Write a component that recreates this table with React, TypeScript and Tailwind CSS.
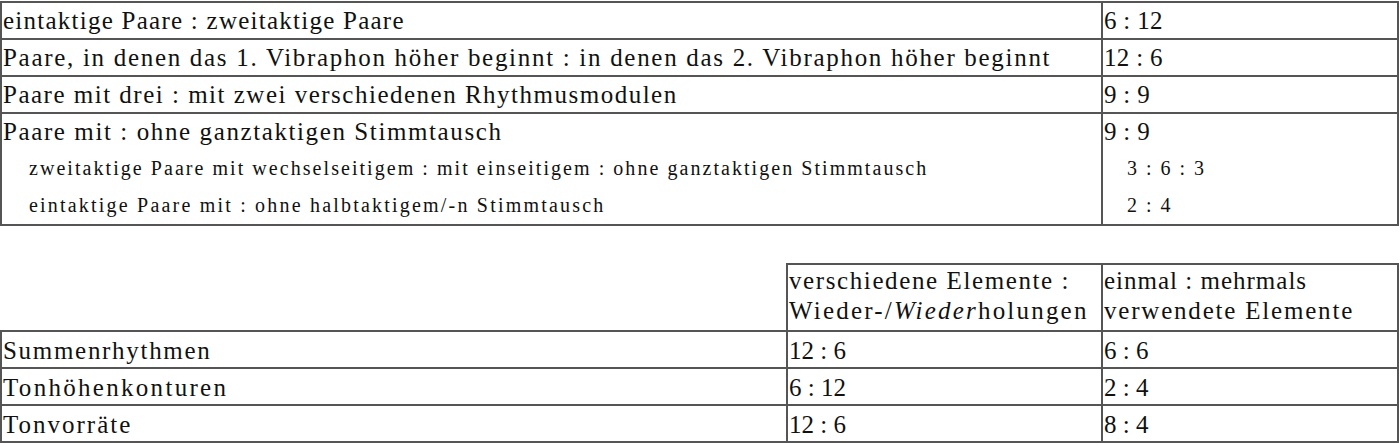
import React from 'react'

const topRows = [
  { label: 'eintaktige Paare : zweitaktige Paare', value: '6 : 12', track: 'tracking-[1.25px]' },
  {
    label: 'Paare, in denen das 1. Vibraphon höher beginnt : in denen das 2. Vibraphon höher beginnt',
    value: '12 : 6',
    track: 'tracking-[1.7px]',
  },
  { label: 'Paare mit drei : mit zwei verschiedenen Rhythmusmodulen', value: '9 : 9', track: 'tracking-[1.5px]' },
]

const subRows = [
  {
    label: 'zweitaktige Paare mit wechselseitigem : mit einseitigem : ohne ganztaktigen Stimmtausch',
    value: '3 : 6 : 3',
    track: 'tracking-[2.05px]',
  },
  { label: 'eintaktige Paare mit : ohne halbtaktigem/-n Stimmtausch', value: '2 : 4', track: 'tracking-[2.2px]' },
]

const bottomRows = [
  { label: 'Summenrhythmen', a: '12 : 6', b: '6 : 6', track: 'tracking-[1.7px]' },
  { label: 'Tonhöhenkonturen', a: '6 : 12', b: '2 : 4', track: 'tracking-[2.3px]' },
  { label: 'Tonvorräte', a: '12 : 6', b: '8 : 4', track: 'tracking-[2px]' },
]

const font = "font-['Liberation_Serif','Times_New_Roman',serif]"
const cell = 'border-2 border-[#555] px-[1px] align-top'

export default function App() {
  return (
    <div className={`w-[1400px] h-[443px] bg-white text-[#111] overflow-hidden ${font}`}>
      {/* first table */}
      <table className="border-collapse table-fixed w-[1399px] mt-[1px] text-[25px] leading-[35px]">
        <colgroup>
          <col className="w-[1101px]" />
          <col />
        </colgroup>
        <tbody>
          {topRows.map((r) => (
            <tr key={r.label} className="h-[37px]">
              <td className={`${cell} ${r.track}`}>{r.label}</td>
              <td className={`${cell} tracking-[0.3px]`}>{r.value}</td>
            </tr>
          ))}
          <tr>
            <td className={cell}>
              <div className="h-[36px] tracking-[1.6px]">Paare mit : ohne ganztaktigen Stimmtausch</div>
              {subRows.map((s) => (
                <div key={s.label} className={`h-[37px] pl-[26px] text-[20px] leading-[37px] ${s.track}`}>
                  {s.label}
                </div>
              ))}
            </td>
            <td className={cell}>
              <div className="h-[36px] tracking-[0.3px]">9 : 9</div>
              {subRows.map((s) => (
                <div key={s.value} className="h-[37px] pl-[23px] text-[20px] leading-[37px] tracking-[2px]">
                  {s.value}
                </div>
              ))}
            </td>
          </tr>
        </tbody>
      </table>

      {/* second table */}
      <table className="border-collapse table-fixed w-[1399px] mt-[37px] text-[25px] leading-[32px]">
        <colgroup>
          <col className="w-[786px]" />
          <col className="w-[315px]" />
          <col />
        </colgroup>
        <tbody>
          <tr className="h-[67px]">
            <td className="border-2 border-transparent border-b-[#555] border-r-[#555]" />
            <td className={`${cell} leading-[30px] pt-[1px]`}>
              <div className="tracking-[1.6px]">verschiedene Elemente :</div>
              <div className="tracking-[2.2px]">
                Wieder-/<i>Wieder</i>holungen
              </div>
            </td>
            <td className={`${cell} leading-[30px] pt-[1px]`}>
              <div className="tracking-[1px]">einmal : mehrmals</div>
              <div className="tracking-[1.8px]">verwendete Elemente</div>
            </td>
          </tr>
          {bottomRows.map((r) => (
            <tr key={r.label} className="h-[37px]">
              <td className={`${cell} pt-[3px] ${r.track}`}>{r.label}</td>
              <td className={`${cell} pt-[3px]`}>{r.a}</td>
              <td className={`${cell} pt-[3px]`}>{r.b}</td>
            </tr>
          ))}
        </tbody>
      </table>
    </div>
  )
}
